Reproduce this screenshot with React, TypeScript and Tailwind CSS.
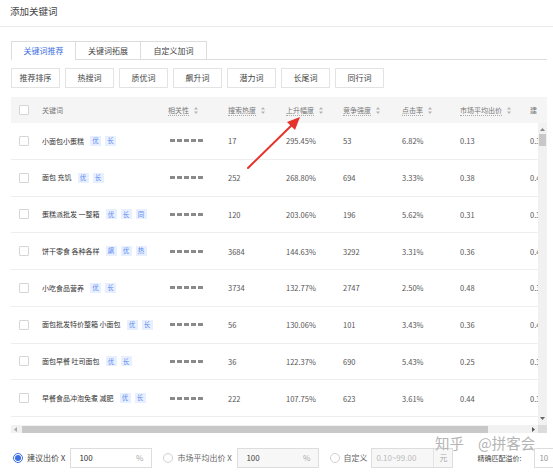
import React from 'react';

interface Row {
  kw: string;
  tags: string[];
  search: string;
  rise: string;
  comp: string;
  ctr: string;
  price: string;
  extra: string;
}

const rows: Row[] = [
  { kw: '小面包小蛋糕', tags: ['优', '长'], search: '17', rise: '295.45%', comp: '53', ctr: '6.82%', price: '0.13', extra: '0.35' },
  { kw: '面包 充饥', tags: ['优', '长'], search: '252', rise: '268.80%', comp: '694', ctr: '3.33%', price: '0.38', extra: '0.42' },
  { kw: '蛋糕派批发 一整箱', tags: ['优', '长', '同'], search: '120', rise: '203.06%', comp: '196', ctr: '5.62%', price: '0.31', extra: '0.33' },
  { kw: '饼干零食 各种各样', tags: ['飙', '优', '热'], search: '3684', rise: '144.63%', comp: '3292', ctr: '3.31%', price: '0.36', extra: '0.44' },
  { kw: '小吃食品营养', tags: ['优', '长'], search: '3734', rise: '132.77%', comp: '2747', ctr: '2.50%', price: '0.48', extra: '0.32' },
  { kw: '面包批发特价整箱 小面包', tags: ['优', '长'], search: '56', rise: '130.06%', comp: '101', ctr: '3.43%', price: '0.36', extra: '0.40' },
  { kw: '面包早餐 吐司面包', tags: ['优', '长'], search: '36', rise: '122.37%', comp: '690', ctr: '5.43%', price: '0.25', extra: '0.31' },
  { kw: '早餐食品冲泡免煮 减肥', tags: ['优', '长'], search: '222', rise: '107.75%', comp: '623', ctr: '3.61%', price: '0.44', extra: '0.32' },
];

const filters = ['推荐排序', '热搜词', '质优词', '飙升词', '潜力词', '长尾词', '同行词'];

// column template shared by header and rows
const cols = 'grid grid-cols-[31px_126px_60px_58px_57px_59px_58px_70px_60px]';

function SortIcon() {
  return (
    <svg width="4" height="7" viewBox="0 0 4 7" className="ml-[5px] shrink-0">
      <path d="M2 0 L4 2.6 L0 2.6 Z" fill="#b5b5b5" />
      <path d="M2 7 L4 4.4 L0 4.4 Z" fill="#b5b5b5" />
    </svg>
  );
}

function Checkbox() {
  return <div className="w-[10px] h-[10px] border border-[#d6d6d6] bg-white rounded-[1px]" />;
}

function Radio({ checked }: { checked?: boolean }) {
  return checked ? (
    <div className="w-[10px] h-[10px] rounded-full border border-[#3d6fe0] flex items-center justify-center shrink-0">
      <div className="w-[6px] h-[6px] rounded-full bg-[#3d6fe0]" />
    </div>
  ) : (
    <div className="w-[10px] h-[10px] rounded-full border border-[#d0d0d0] bg-white shrink-0" />
  );
}

function HeadLabel({ text }: { text: string }) {
  return (
    <div className="flex items-center">
      <span className="border-b border-dotted border-[#aaa] leading-[10px]">{text}</span>
      <SortIcon />
    </div>
  );
}

export default function App() {
  return (
    <div
      className="relative w-[553px] h-[472px] overflow-hidden bg-white text-[#333]"
      style={{ fontFamily: '"Noto Sans CJK SC", "Noto Sans", sans-serif' }}
    >
      {/* title */}
      <div className="h-[27px] flex items-center pl-[10px] pb-[3px] border-b border-[#ececec] text-[9.5px] text-[#444]">
        添加关键词
      </div>

      {/* tabs */}
      <div className="ml-[11px] mt-[14px] w-[536px] flex border-b border-[#dcdcdc] h-[19px]">
        <div className="w-[65px] h-[19px] -mb-px bg-white border border-b-0 border-[#dcdcdc] flex items-center justify-center text-[8px] text-[#3d6fe0]">
          关键词推荐
        </div>
        <div className="w-[65px] h-[18px] border-t border-r border-[#dcdcdc] flex items-center justify-center text-[8px] text-[#444]">
          关键词拓展
        </div>
        <div className="w-[66px] h-[18px] border-t border-r border-[#dcdcdc] flex items-center justify-center text-[8px] text-[#444]">
          自定义加词
        </div>
      </div>

      {/* filter buttons */}
      <div className="ml-[11px] mt-[8px] flex gap-[5px]">
        {filters.map((f) => (
          <div
            key={f}
            className="w-[49px] h-[20px] border border-[#e3e3e3] bg-white flex items-center justify-center text-[8px] text-[#444]"
          >
            {f}
          </div>
        ))}
      </div>

      {/* table */}
      <div className="ml-[11px] mt-[9px] w-[536px]">
        <div className={`${cols} h-[26px] bg-[#f5f5f5] items-center text-[7px] text-[#777] overflow-hidden`}>
          <div className="pl-[8px]">
            <Checkbox />
          </div>
          <div>关键词</div>
          <HeadLabel text="相关性" />
          <HeadLabel text="搜索热度" />
          <HeadLabel text="上升幅度" />
          <HeadLabel text="竞争强度" />
          <HeadLabel text="点击率" />
          <HeadLabel text="市场平均出价" />
          <div>建</div>
        </div>

        <div className="flex h-[302px]">
          <div className="w-[527px] overflow-hidden">
            {rows.map((r) => (
              <div
                key={r.kw}
                className={`${cols} h-[36.75px] items-center border-b border-[#eeeeee] text-[7.5px] text-[#555]`}
              >
                <div className="pl-[8px]">
                  <Checkbox />
                </div>
                <div className="flex items-center whitespace-nowrap">
                  <span className="text-[7px] text-[#333]">{r.kw}</span>
                  <div className="flex gap-[4px] ml-[6px]">
                    {r.tags.map((t, i) => (
                      <span
                        key={i}
                        className="w-[11px] h-[10px] bg-[#e8f0ff] text-[#5b8af0] text-[6.5px] flex items-center justify-center"
                      >
                        {t}
                      </span>
                    ))}
                  </div>
                </div>
                <div className="flex gap-[2px] pl-[2px]">
                  {[0, 1, 2, 3, 4].map((i) => (
                    <span key={i} className="w-[5px] h-[3px] bg-[#8a8a8a]" />
                  ))}
                </div>
                <div>{r.search}</div>
                <div>{r.rise}</div>
                <div>{r.comp}</div>
                <div>{r.ctr}</div>
                <div>{r.price}</div>
                <div>{r.extra}</div>
              </div>
            ))}
          </div>
          {/* vertical scrollbar */}
          <div className="w-[9px] bg-[#f1f1f1] flex flex-col items-center">
            <svg width="5" height="3" viewBox="0 0 5 3" className="mt-[5px]">
              <path d="M2.5 0 L5 3 L0 3 Z" fill="#888" />
            </svg>
            <div className="w-[7px] h-[12px] bg-[#c8c8c8] mt-[3px]" />
            <div className="flex-1" />
            <svg width="5" height="3" viewBox="0 0 5 3" className="mb-[5px]">
              <path d="M0 0 L5 0 L2.5 3 Z" fill="#666" />
            </svg>
          </div>
        </div>

        {/* horizontal scrollbar */}
        <div className="flex h-[8px]">
          <div className="w-[527px] bg-[#f1f1f1] flex items-center">
            <svg width="3" height="5" viewBox="0 0 3 5" className="ml-[3px]">
              <path d="M0 2.5 L3 0 L3 5 Z" fill="#aaa" />
            </svg>
            <div className="w-[466px] h-[7px] bg-[#c8c8c8] ml-[5px]" />
            <div className="flex-1" />
            <svg width="3" height="5" viewBox="0 0 3 5" className="mr-[3px]">
              <path d="M0 0 L3 2.5 L0 5 Z" fill="#555" />
            </svg>
          </div>
          <div className="w-[9px] bg-[#dcdcdc]" />
        </div>
      </div>

      {/* bid options */}
      <div className="mt-[15px] pl-[13px] flex items-center h-[20px] text-[8px] text-[#444] whitespace-nowrap">
        <Radio checked />
        <span className="ml-[4px] shrink-0">建议出价 X</span>
        <div className="ml-[5px] shrink-0 w-[82px] h-[20px] border border-[#ddd] flex items-center justify-between px-[8px]">
          <span className="text-[#333]">100</span>
          <span className="text-[#aaa]">%</span>
        </div>
        <div className="ml-[11px] shrink-0">
          <Radio />
        </div>
        <span className="ml-[4px] shrink-0 w-[55px] text-[#666]">市场平均出价 X</span>
        <div className="ml-[5px] shrink-0 w-[82px] h-[20px] border border-[#ddd] bg-[#f7f7f7] flex items-center justify-between px-[8px]">
          <span className="text-[#444]">100</span>
          <span className="text-[#aaa]">%</span>
        </div>
        <div className="ml-[11px] shrink-0">
          <Radio />
        </div>
        <span className="ml-[3px] shrink-0 w-[24px] text-[#666]">自定义</span>
        <div className="ml-[4px] shrink-0 w-[82px] h-[20px] border border-[#ddd] bg-[#f7f7f7] flex items-center">
          <span className="flex-1 pl-[4px] text-[#bbb]">0.10~99.00</span>
          <span className="w-[19px] h-full border-l border-[#e3e3e3] flex items-center justify-center text-[#aaa]">元</span>
        </div>
        <span className="ml-[24px] shrink-0 w-[51px] text-[7px] text-[#444]">精确匹配溢价:</span>
        <div className="ml-[6px] shrink-0 w-[40px] h-[20px] border border-[#ddd] flex items-center pl-[4px] text-[#999]">10</div>
      </div>

      {/* watermark */}
      <div className="absolute left-[435px] top-[436px] flex items-center text-[14.5px] text-[#b4b4b4] whitespace-nowrap leading-none">
        <span>知乎</span>
        <span className="ml-[14px]">@拼客会</span>
      </div>

      {/* red annotation arrow */}
      <svg className="absolute left-0 top-0" width="553" height="472" viewBox="0 0 553 472">
        <line x1="248" y1="168" x2="293" y2="124" stroke="#e5322b" strokeWidth="2" strokeLinecap="round" />
        <path d="M300 117 L287 122 L295 130 Z" fill="#e5322b" />
      </svg>
    </div>
  );
}
